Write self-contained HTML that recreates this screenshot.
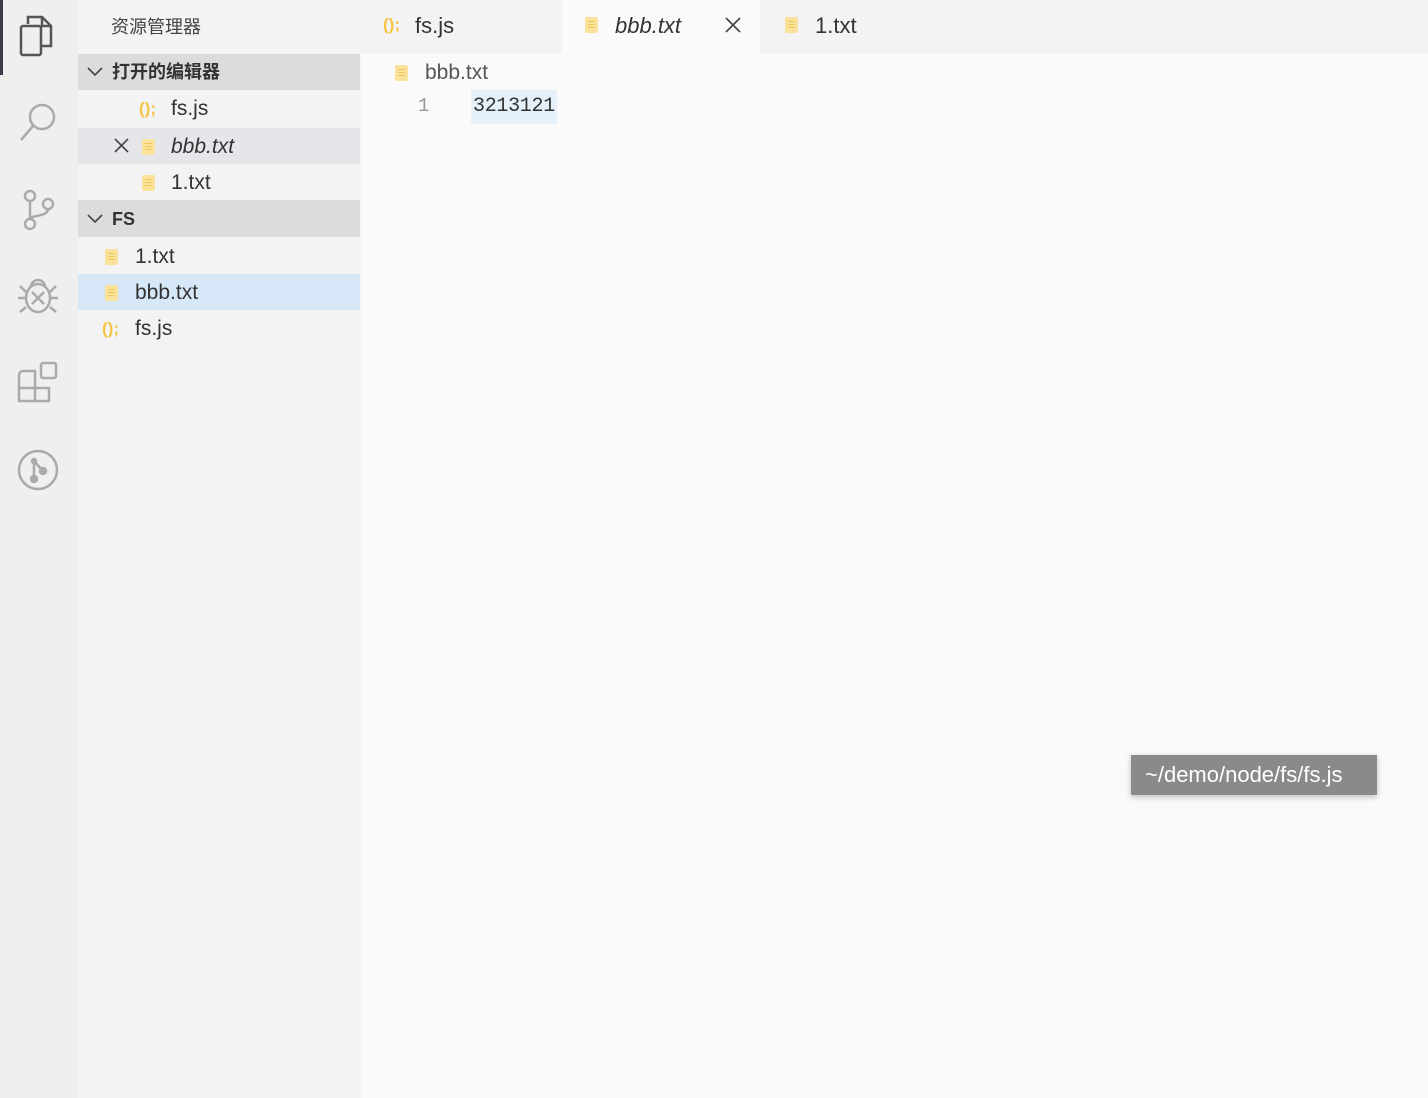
<!DOCTYPE html><html><head><meta charset="utf-8"><style>
*{margin:0;padding:0;box-sizing:border-box}
body{width:1428px;height:1098px;background:#fafafa;font-family:"Liberation Sans","Noto Sans CJK SC",sans-serif;position:relative;overflow:hidden;color:#333}
.abs{position:absolute}
#act{left:0;top:0;width:78px;height:1098px;background:#efeff0}
#side{left:78px;top:0;width:283px;height:1098px;background:#f3f3f3}
#tabs{left:361px;top:0;width:1067px;height:53px;background:#f3f3f3}
.row{position:absolute;left:78px;width:282px;height:36px;font-size:21px;line-height:38px}
.doc{position:absolute;width:13px;height:16px;background:#fbe29a;border-radius:2px}
.doc:after{content:"";position:absolute;left:3px;top:4px;width:7px;height:8px;background:repeating-linear-gradient(#f0c55a 0 1px,transparent 1px 3px)}
.js{position:absolute;color:#f5c443;font-weight:bold;font-size:17px}
svg{position:absolute}
</style></head><body>
<div id="act" class="abs"></div>
<div class="abs" style="left:0;top:0;width:3px;height:75px;background:#3a3a4a"></div>
<svg style="left:18px;top:14px" width="40" height="44" viewBox="0 0 40 44" fill="none" stroke="#555" stroke-width="2.5"><path d="M10 10V3h14l9 9v20H24"/><path d="M24 3v9h9"/><rect x="3" y="12" width="20" height="29" rx="2"/></svg>
<svg style="left:18px;top:100px" width="42" height="42" fill="none" stroke="#aaa" stroke-width="2.5"><circle cx="24" cy="17" r="12"/><path d="M15 26L3 40"/></svg>
<svg style="left:18px;top:188px" width="40" height="44" fill="none" stroke="#aaa" stroke-width="2.5"><circle cx="12" cy="8" r="5"/><circle cx="12" cy="36" r="5"/><circle cx="30" cy="16" r="5"/><path d="M12 13v18M30 21c0 8-18 6-18 10"/></svg>
<svg style="left:16px;top:274px" width="44" height="44" fill="none" stroke="#aaa" stroke-width="2.5"><ellipse cx="22" cy="24" rx="12" ry="14"/><path d="M15 13a7 7 0 0 1 14 0"/><path d="M16 18l12 12M28 18L16 30M2 24h8M34 24h8M4 12l6 6M40 12l-6 6M4 38l6-5M40 38l-6-5"/></svg>
<svg style="left:16px;top:360px" width="44" height="44" fill="none" stroke="#aaa" stroke-width="2.5"><path d="M3 17v24h30V28H19V11H7a4 4 0 0 0-4 4zM3 28h16v13"/><rect x="25" y="3" width="15" height="15" rx="2"/></svg>
<svg style="left:16px;top:448px" width="44" height="44" fill="none" stroke="#aaa" stroke-width="2.5"><circle cx="22" cy="22" r="19"/><path d="M18 13v18M18 13l9 10"/><circle cx="18" cy="13" r="2" fill="#aaa"/><circle cx="27" cy="23" r="3" fill="#aaa"/><circle cx="18" cy="31" r="3" fill="#aaa"/></svg>
<div id="side" class="abs"></div>
<div class="abs" style="left:111px;top:13px;font-size:18px;color:#444">资源管理器</div>
<div class="row" style="top:54px;background:#dcdcdc;font-weight:bold;font-size:18px"><svg style="left:9px;top:13px" width="16" height="10" fill="none" stroke="#444" stroke-width="1.6"><path d="M1 1l7 7 7-7"/></svg><span style="position:absolute;left:34px;line-height:36px">打开的编辑器</span></div>
<div class="row" style="top:90px"><span class="js" style="left:61px;top:0">();</span><span style="position:absolute;left:93px">fs.js</span></div>
<div class="row" style="top:128px;background:#e4e6e9"><svg style="left:36px;top:10px" width="15" height="15" stroke="#444" stroke-width="1.6"><path d="M1 1l13 13M14 1L1 14"/></svg><div class="doc" style="left:64px;top:11px"></div><span style="position:absolute;left:93px;font-style:italic">bbb.txt</span></div>
<div class="row" style="top:164px"><div class="doc" style="left:64px;top:11px"></div><span style="position:absolute;left:93px">1.txt</span></div>
<div class="row" style="top:200px;background:#dcdcdc;font-weight:bold;font-size:18px;height:37px"><svg style="left:9px;top:14px" width="16" height="10" fill="none" stroke="#444" stroke-width="1.6"><path d="M1 1l7 7 7-7"/></svg><span style="position:absolute;left:34px;line-height:38px">FS</span></div>
<div class="row" style="top:238px"><div class="doc" style="left:27px;top:11px"></div><span style="position:absolute;left:57px">1.txt</span></div>
<div class="row" style="top:274px;background:#d6e7f7"><div class="doc" style="left:27px;top:11px"></div><span style="position:absolute;left:57px">bbb.txt</span></div>
<div class="row" style="top:310px"><span class="js" style="left:24px">();</span><span style="position:absolute;left:57px">fs.js</span></div>
<div id="tabs" class="abs"></div>
<div class="abs" style="left:562px;top:0;width:198px;height:53px;background:#fafafa"></div>
<span class="js abs" style="left:383px;top:15px">();</span><div class="abs" style="left:415px;top:13px;font-size:22px">fs.js</div>
<div class="doc" style="left:585px;top:17px"></div><div class="abs" style="left:615px;top:13px;font-size:22px;font-style:italic">bbb.txt</div>
<svg style="left:725px;top:17px" width="16" height="16" stroke="#444" stroke-width="1.6"><path d="M1 1l14 14M15 1L1 15"/></svg>
<div class="doc" style="left:785px;top:17px"></div><div class="abs" style="left:815px;top:13px;font-size:22px">1.txt</div>
<div class="doc" style="left:395px;top:65px"></div><div class="abs" style="left:425px;top:61px;font-size:21px;color:#555">bbb.txt</div>
<div class="abs" style="left:418px;top:95px;font-family:'Liberation Mono',monospace;font-size:19px;color:#999">1</div>
<div class="abs" style="left:471px;top:90px;width:86px;height:34px;background:#e5f0fb"></div>
<div class="abs" style="left:473px;top:95px;font-family:'Liberation Mono',monospace;font-size:20px;color:#333;letter-spacing:-0.3px">3213121</div>
<div class="abs" style="left:1131px;top:755px;width:246px;height:40px;background:#8a8a8a;color:#fff;font-size:22px;line-height:40px;padding-left:14px;box-shadow:0 2px 6px rgba(0,0,0,.25)">~/demo/node/fs/fs.js</div>
</body></html>
